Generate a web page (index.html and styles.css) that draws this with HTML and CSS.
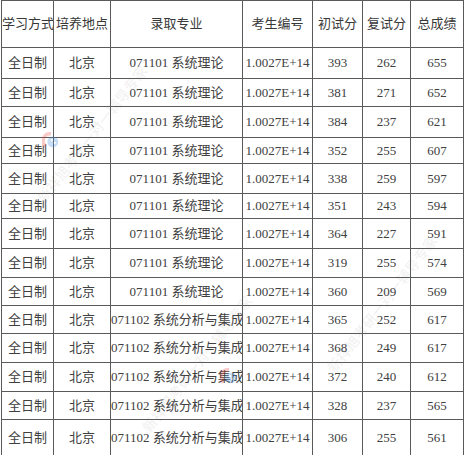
FILE: index.html
```html
<!DOCTYPE html>
<html lang="zh-CN">
<head>
<meta charset="utf-8">
<title>录取名单</title>
<link rel="stylesheet" href="styles.css">
</head>
<body>
<div class="sheet">
  <table class="grid">
    <colgroup>
      <col class="c1"><col class="c2"><col class="c3"><col class="c4"><col class="c5"><col class="c6"><col class="c7">
    </colgroup>
    <thead>
      <tr class="h47"><th>学习方式</th><th>培养地点</th><th>录取专业</th><th>考生编号</th><th>初试分</th><th>复试分</th><th>总成绩</th></tr>
    </thead>
    <tbody>
      <tr class="h31"><td>全日制</td><td>北京</td><td>071101 系统理论</td><td>1.0027E+14</td><td>393</td><td>262</td><td>655</td></tr>
      <tr class="h28"><td>全日制</td><td>北京</td><td>071101 系统理论</td><td>1.0027E+14</td><td>381</td><td>271</td><td>652</td></tr>
      <tr class="h31"><td>全日制</td><td>北京</td><td>071101 系统理论</td><td>1.0027E+14</td><td>384</td><td>237</td><td>621</td></tr>
      <tr class="h26"><td>全日制</td><td>北京</td><td>071101 系统理论</td><td>1.0027E+14</td><td>352</td><td>255</td><td>607</td></tr>
      <tr class="h30"><td>全日制</td><td>北京</td><td>071101 系统理论</td><td>1.0027E+14</td><td>338</td><td>259</td><td>597</td></tr>
      <tr class="h25"><td>全日制</td><td>北京</td><td>071101 系统理论</td><td>1.0027E+14</td><td>351</td><td>243</td><td>594</td></tr>
      <tr class="h30"><td>全日制</td><td>北京</td><td>071101 系统理论</td><td>1.0027E+14</td><td>364</td><td>227</td><td>591</td></tr>
      <tr class="h29"><td>全日制</td><td>北京</td><td>071101 系统理论</td><td>1.0027E+14</td><td>319</td><td>255</td><td>574</td></tr>
      <tr class="h28"><td>全日制</td><td>北京</td><td>071101 系统理论</td><td>1.0027E+14</td><td>360</td><td>209</td><td>569</td></tr>
      <tr class="h28"><td>全日制</td><td>北京</td><td class="left">071102 系统分析与集成</td><td>1.0027E+14</td><td>365</td><td>252</td><td>617</td></tr>
      <tr class="h29"><td>全日制</td><td>北京</td><td class="left">071102 系统分析与集成</td><td>1.0027E+14</td><td>368</td><td>249</td><td>617</td></tr>
      <tr class="h29"><td>全日制</td><td>北京</td><td class="left">071102 系统分析与集成</td><td>1.0027E+14</td><td>372</td><td>240</td><td>612</td></tr>
      <tr class="h28"><td>全日制</td><td>北京</td><td class="left">071102 系统分析与集成</td><td>1.0027E+14</td><td>328</td><td>237</td><td>565</td></tr>
      <tr class="h36"><td>全日制</td><td>北京</td><td class="left">071102 系统分析与集成</td><td>1.0027E+14</td><td>306</td><td>255</td><td>561</td></tr>
    </tbody>
  </table>

  <div class="wm wm-a">新祥旭考研一对一辅导专家</div>
  <div class="wm wm-b">新祥旭考研一对一辅导专家</div>
  <div class="wm wm-c">新祥旭考研一对一辅导专家</div>

  <svg class="logo logo-a" viewBox="0 0 20 20" aria-hidden="true">
    <path d="M10 2 A8 8 0 0 0 4 16" fill="none" stroke="#e8463c" stroke-width="4"/>
    <circle cx="12" cy="11" r="6" fill="#3d8be0"/>
    <circle cx="11" cy="9" r="1.3" fill="#fff"/>
    <circle cx="14" cy="12" r="1.3" fill="#fff"/>
  </svg>
  <svg class="logo logo-b" viewBox="0 0 20 20" aria-hidden="true">
    <path d="M10 2 A8 8 0 0 0 4 16" fill="none" stroke="#e8463c" stroke-width="4"/>
    <circle cx="12" cy="11" r="6" fill="#3d8be0"/>
    <circle cx="11" cy="9" r="1.3" fill="#fff"/>
    <circle cx="14" cy="12" r="1.3" fill="#fff"/>
  </svg>
</div>
</body>
</html>
```

FILE: styles.css
```css
html, body {
  margin: 0;
  padding: 0;
  background: #ffffff;
}

.sheet {
  position: relative;
  width: 464px;
  height: 455px;
  overflow: hidden;
  background: #ffffff;
}

.grid {
  border-collapse: collapse;
  table-layout: fixed;
  width: 463px;
  margin: 0 0 0 1px;
  font-family: "Liberation Serif", "Noto Sans CJK SC", serif;
  font-size: 13px;
  color: #404040;
}

.c1 { width: 52px; }
.c2 { width: 57px; }
.c3 { width: 132px; }
.c4 { width: 70px; }
.c5 { width: 50px; }
.c6 { width: 48px; }
.c7 { width: 53px; }

.grid th,
.grid td {
  border: 1px solid #5a5a5a;
  padding: 0;
  text-align: center;
  vertical-align: middle;
  white-space: nowrap;
  overflow: hidden;
  line-height: 16px;
}

.grid th {
  font-weight: normal;
  color: #383838;
}

.grid td.left {
  text-align: left;
}

.h25 { height: 25px; }
.h26 { height: 26px; }
.h28 { height: 28px; }
.h29 { height: 29px; }
.h30 { height: 30px; }
.h31 { height: 31px; }
.h36 { height: 36px; }
.h47 { height: 47px; }

.wm {
  position: absolute;
  font-family: "Noto Sans CJK SC", sans-serif;
  font-size: 14px;
  font-weight: bold;
  color: rgba(120, 120, 120, 0.09);
  white-space: nowrap;
  transform-origin: left center;
  transform: rotate(-52deg);
  pointer-events: none;
}

.wm-a { left: 40px; top: 190px; }
.wm-b { left: 145px; top: 420px; }
.wm-c { left: 330px; top: 360px; }

.logo {
  position: absolute;
  width: 18px;
  height: 18px;
  opacity: 0.28;
}

.logo-a { left: 42px; top: 132px; }
.logo-b { left: 220px; top: 368px; }
```
